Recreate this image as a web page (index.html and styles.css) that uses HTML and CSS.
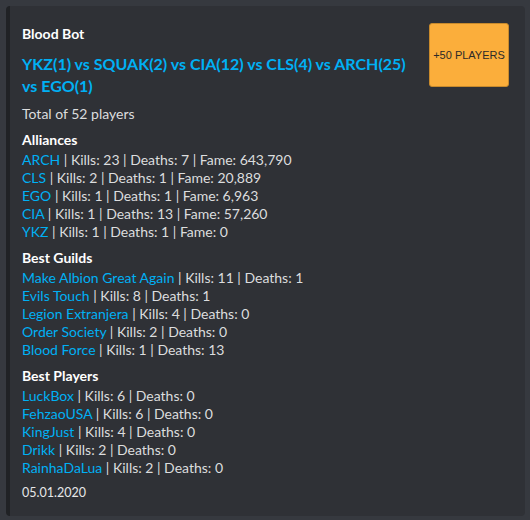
FILE: index.html
```html
<!DOCTYPE html>
<html>
<head>
<meta charset="utf-8">
<link rel="stylesheet" href="styles.css">
</head>
<body>
<div class="embed">
  <div class="grid">
    <div class="main">
      <div class="author">Blood Bot</div>
      <div class="title">YKZ(1) vs SQUAK(2) vs CIA(12) vs CLS(4) vs ARCH(25) vs EGO(1)</div>
      <div class="desc">Total of 52 players</div>
      <div class="fields">
        <div class="field">
          <div class="fname">Alliances</div>
          <div class="fvalue">
            <div><span class="link">ARCH</span> | Kills: 23 | Deaths: 7 | Fame: 643,790</div>
            <div><span class="link">CLS</span> | Kills: 2 | Deaths: 1 | Fame: 20,889</div>
            <div><span class="link">EGO</span> | Kills: 1 | Deaths: 1 | Fame: 6,963</div>
            <div><span class="link">CIA</span> | Kills: 1 | Deaths: 13 | Fame: 57,260</div>
            <div><span class="link">YKZ</span> | Kills: 1 | Deaths: 1 | Fame: 0</div>
          </div>
        </div>
        <div class="field">
          <div class="fname">Best Guilds</div>
          <div class="fvalue">
            <div><span class="link">Make Albion Great Again</span> | Kills: 11 | Deaths: 1</div>
            <div><span class="link">Evils Touch</span> | Kills: 8 | Deaths: 1</div>
            <div><span class="link">Legion Extranjera</span> | Kills: 4 | Deaths: 0</div>
            <div><span class="link">Order Society</span> | Kills: 2 | Deaths: 0</div>
            <div><span class="link">Blood Force</span> | Kills: 1 | Deaths: 13</div>
          </div>
        </div>
        <div class="field">
          <div class="fname">Best Players</div>
          <div class="fvalue">
            <div><span class="link">LuckBox</span> | Kills: 6 | Deaths: 0</div>
            <div><span class="link">FehzaoUSA</span> | Kills: 6 | Deaths: 0</div>
            <div><span class="link">KingJust</span> | Kills: 4 | Deaths: 0</div>
            <div><span class="link">Drikk</span> | Kills: 2 | Deaths: 0</div>
            <div><span class="link">RainhaDaLua</span> | Kills: 2 | Deaths: 0</div>
          </div>
        </div>
      </div>
      <div class="footer">05.01.2020</div>
    </div>
    <div class="thumb">+50 PLAYERS</div>
  </div>
</div>
</body>
</html>
```

FILE: styles.css
```css
html, body {
  margin: 0;
  padding: 0;
  background: #36393f;
}
body {
  padding: 6px 5px 4px 6px;
  font-family: Lato, "Liberation Sans", sans-serif;
  color: #dcddde;
}
.embed {
  background: #2f3136;
  border-left: 4px solid #202225;
  border-radius: 4px;
  height: 510px;
  box-sizing: border-box;
}
.grid {
  display: grid;
  grid-template-columns: 1fr auto;
  padding: 8px 16px 16px 12px;
}
.main {
  min-width: 0;
}
.author {
  margin-top: 9px;
  font-size: 14px;
  font-weight: 700;
  line-height: 22px;
  color: #ffffff;
}
.title {
  margin-top: 8px;
  font-size: 16px;
  font-weight: 700;
  line-height: 22px;
  color: #00b0f4;
}
.desc {
  margin-top: 8px;
  font-size: 14px;
  line-height: 18px;
}
.fields {
  margin-top: 8px;
  display: flex;
  flex-direction: column;
  gap: 8px;
}
.fname {
  font-size: 14px;
  font-weight: 700;
  line-height: 18px;
  color: #ffffff;
  margin-bottom: 2px;
}
.fvalue {
  font-size: 14px;
  line-height: 18px;
}
.link {
  color: #00b0f4;
}
.footer {
  margin-top: 8px;
  font-size: 12.5px;
  line-height: 16px;
  font-weight: 400;
  color: #e6e7e8;
}
.thumb {
  margin-top: 9px;
  margin-left: 16px;
  width: 80px;
  height: 64px;
  box-sizing: border-box;
  background: #fbae3b;
  border: 1px solid #c88a2c;
  border-radius: 3px;
  display: flex;
  align-items: center;
  justify-content: center;
  font-family: "Liberation Sans", Arial, sans-serif;
  font-size: 11px;
  color: #2c2a28;
}
```
